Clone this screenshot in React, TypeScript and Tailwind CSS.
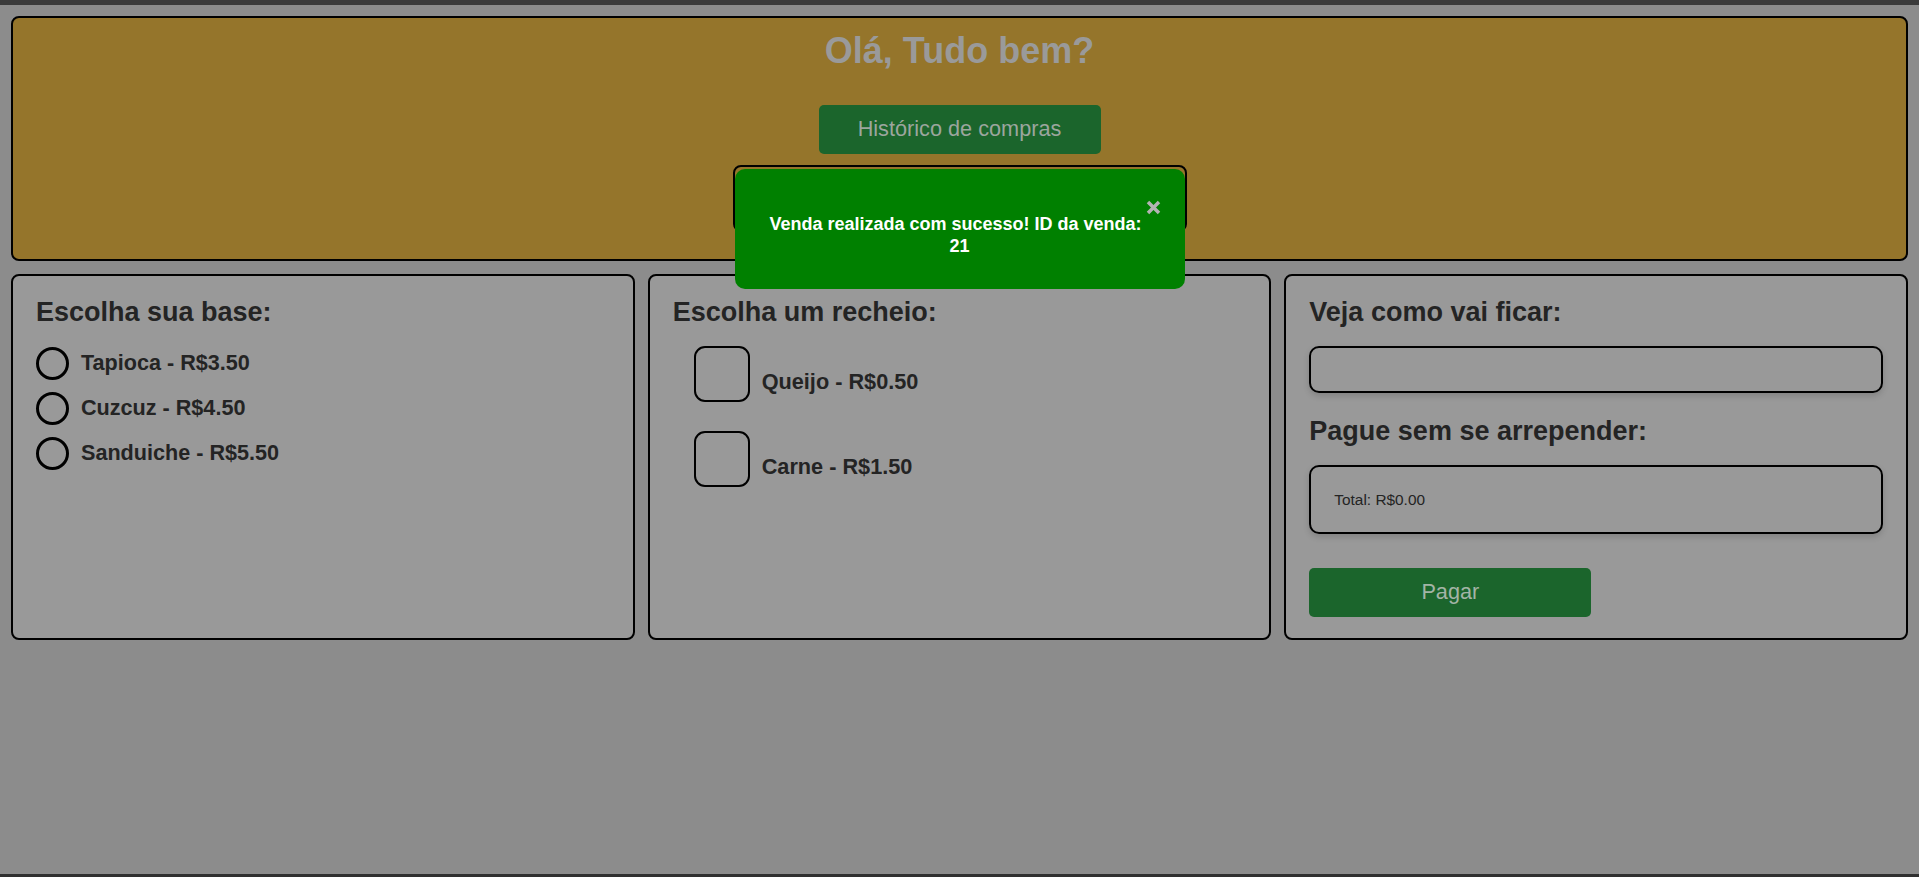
import React from 'react';

const bases = ['Tapioca - R$3.50', 'Cuzcuz - R$4.50', 'Sanduiche - R$5.50'];
const recheios = ['Queijo - R$0.50', 'Carne - R$1.50'];

function Panel({ children }: { children: React.ReactNode }) {
  return (
    <div className="border-2 border-black rounded-[8px] bg-[#999999] px-[23px] pt-[20px] flex flex-col">
      {children}
    </div>
  );
}

function Heading({ children, className = '' }: { children: React.ReactNode; className?: string }) {
  return <h2 className={`text-[27px] leading-[32px] font-bold text-[#242424] ${className}`}>{children}</h2>;
}

export default function App() {
  return (
    <div className="relative min-h-screen flex flex-col bg-[#8c8c8c] font-['Liberation_Sans',Arial,sans-serif]">
      <div className="h-[5px] bg-[#3b3b3b]" />

      <div className="flex-1 flex flex-col gap-[13px] px-[11px] pt-[11px]">
        {/* Header */}
        <div className="h-[245px] flex flex-col items-center pt-[13px] border-2 border-black rounded-[8px] bg-[#95752b]">
          <h1 className="text-[36px] leading-[40px] font-bold text-[#9a9a9a]">Olá, Tudo bem?</h1>
          <button className="mt-[34px] w-[282px] h-[49px] rounded-[5px] bg-[#1b652c] text-[21.7px] text-[#9ca69e]">
            Histórico de compras
          </button>
          <div className="mt-[11px] w-[454px] h-[67px] border-2 border-black rounded-[8px]" />
        </div>

        {/* Panels */}
        <div className="grid grid-cols-3 gap-[13px] h-[366px]">
          <Panel>
            <Heading>Escolha sua base:</Heading>
            <div className="mt-[13px] flex flex-col">
              {bases.map((b) => (
                <label key={b} className="h-[45px] flex items-center gap-[12px]">
                  <span className="w-[33px] h-[33px] rounded-full border-[3px] border-black" />
                  <span className="text-[21.6px] font-bold text-[#242424]">{b}</span>
                </label>
              ))}
            </div>
          </Panel>

          <Panel>
            <Heading>Escolha um recheio:</Heading>
            <div className="mt-[18px] flex flex-col gap-[29px]">
              {recheios.map((r) => (
                <label key={r} className="flex items-end gap-[12px] ml-[21px]">
                  <span className="w-[56px] h-[56px] rounded-[11px] border-2 border-black" />
                  <span className="pb-[8px] text-[21.7px] leading-[24px] font-bold text-[#242424]">{r}</span>
                </label>
              ))}
            </div>
          </Panel>

          <Panel>
            <Heading>Veja como vai ficar:</Heading>
            <div className="mt-[18px] h-[47px] border-2 border-black rounded-[10px] shadow-[0_3px_6px_rgba(0,0,0,0.15)]" />
            <Heading className="mt-[22px]">Pague sem se arrepender:</Heading>
            <div className="mt-[18px] h-[69px] flex items-center px-[23px] border-2 border-black rounded-[10px] shadow-[0_3px_6px_rgba(0,0,0,0.15)]">
              <span className="text-[15.4px] text-[#242424]">Total: R$0.00</span>
            </div>
            <button className="mt-[34px] w-[282px] h-[49px] rounded-[5px] bg-[#1b652c] text-[21.7px] text-[#a3b4a6]">
              Pagar
            </button>
          </Panel>
        </div>
      </div>

      <div className="h-[3px] bg-[#2f2f2f]" />

      {/* Toast */}
      <div className="absolute left-1/2 -translate-x-1/2 top-[169px] w-[450px] h-[120px] rounded-[10px] bg-[#008000] pl-[26px] pr-[34px] pt-[44px] text-center text-[18px] leading-[22px] font-bold text-white">
        Venda realizada com sucesso! ID da venda: <span className="inline-block pl-[8px]">21</span>
        <svg className="absolute left-[411px] top-[31px]" width="15" height="15" viewBox="0 0 15 15">
          <path d="M2 2 L13 13 M13 2 L2 13" stroke="#b3b3b3" strokeWidth="3.5" />
        </svg>
      </div>
    </div>
  );
}
